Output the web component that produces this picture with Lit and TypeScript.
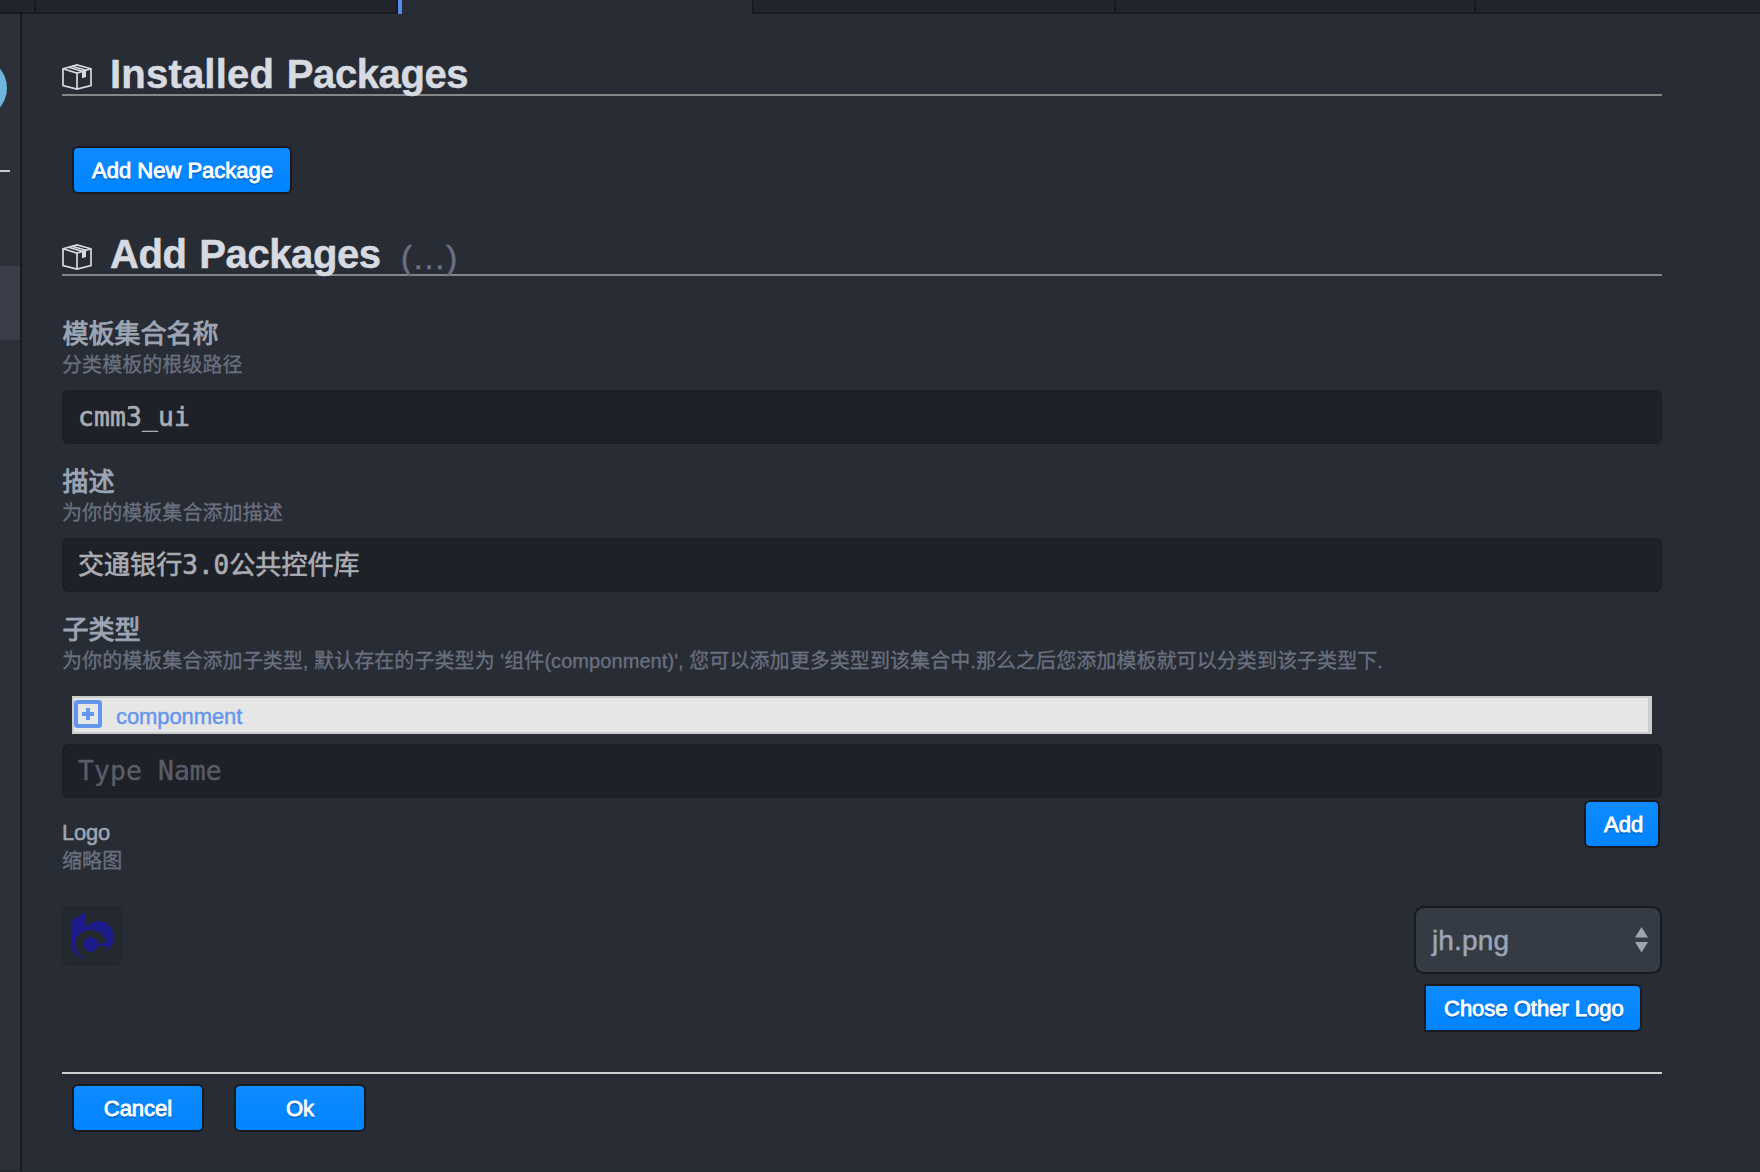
import { LitElement, html, css, svg } from "lit";
import { customElement, property } from "lit/decorators.js";

@customElement("section-heading")
class SectionHeading extends LitElement {
  @property() lead = "";
  @property() note = "";
  @property({ type: Boolean }) wide = false;

  static styles = css`
    :host { display: block; }
    .heading {
      box-sizing: border-box;
      height: 42px;
      border-bottom: 2px solid #868686;
      display: flex;
      align-items: flex-start;
      font-family: "Liberation Sans", sans-serif;
    }
    .icon { width: 30px; height: 26px; margin: 10px 18px 0 0; flex: none; }
    .title {
      font-size: 40px;
      line-height: 46px;
      font-weight: 700;
      letter-spacing: -0.4px;
      word-spacing: 2px;
      color: #d7dae0;
      white-space: pre;
      margin-top: -3px;
      -webkit-text-stroke: 0.5px #d7dae0;
    }
    .wide { letter-spacing: 0.2px; }
    .note { font-size: 34px; line-height: 46px; color: #6b7080; margin: 0 0 0 20px; -webkit-text-stroke: 0.4px #6b7080; }
  `;

  render() {
    return html`<div class="heading">
      <svg class="icon" viewBox="0 0 30 26" fill="none" stroke="#d7dae0" stroke-width="1.700">
        <path d="M1 4.800 15 1l14 3.800v16.700L15 25 1 21.500z" />
        <path d="M1 4.800l14 4.200 14-4.200M15 9v16" />
        <path d="M6.500 3.300l14.500 4.200M10 2.300l14 4" />
        <path d="M20 7.500v6.800l4-1.300V6.200z" fill="#d7dae0" stroke="none" />
      </svg>
      <span class="title"><span class=${this.wide ? "wide" : ""}>${this.lead}</span> Packages</span>
      ${this.note ? html`<span class="note">${this.note}</span>` : ""}
    </div>`;
  }
}

const plusIcon = svg`<rect x="2" y="2" width="24" height="24" rx="1.500" fill="none" stroke="#6495ed" stroke-width="4"/>
  <path d="M12 8h4v4h4v4h-4v4h-4v-4H8v-4h4z" fill="#6495ed"/>`;

@customElement("app-root")
class AppRoot extends LitElement {
  static styles = css`
    :host {
      display: block;
      font-family: "Liberation Sans", "Noto Sans CJK SC", sans-serif;
      color: #9da5b4;
    }
    * { box-sizing: border-box; }
    .window {
      width: 1760px;
      height: 1172px;
      overflow: hidden;
      background: #282c34;
      border-bottom: 1px solid #2a2530;
      display: flex;
      flex-direction: column;
    }
    .tabs { display: flex; height: 14px; flex: none; }
    .tab { background: #21252b; border-right: 2px solid #181a1f; border-bottom: 2px solid #181a1f; }
    .tab.first { width: 36px; }
    .tab.second { width: 362px; }
    .tab.active { width: 354px; background: #282c34; border: 0; border-left: 4px solid #568af2; }
    .tab.third { width: 364px; border-left: 2px solid #181a1f; border-bottom-left-radius: 2px; }
    .tab.fourth { width: 360px; }
    .tab.last { flex: 1; border-right: 0; }
    .body { flex: 1; display: flex; }
    .side { width: 22px; background: #2c3038; border-right: 2px solid #181a1f; overflow: hidden; flex: none; }
    .avatar { width: 60px; height: 60px; border-radius: 50%; background: #6fb5dc; margin: 44px 0 0 -53px; }
    .rule { width: 10px; height: 2px; background: #ccc; margin-top: 52px; }
    .selected { height: 74px; background: #3a3e4a; margin-top: 94px; }
    .panel { width: 1600px; margin-left: 40px; padding-top: 40px; }
    .btn {
      display: block;
      height: 48px;
      padding: 1px 18px 0;
      border: 2px solid #181a1f;
      border-radius: 6px;
      background: linear-gradient(#0f8bff, #0084ff);
      color: #fff;
      font: 22px/43px "Liberation Sans", sans-serif;
      -webkit-text-stroke: 0.8px #fff;
      text-shadow: 0 2px 1px rgba(0, 0, 0, 0.25);
      text-align: center;
      white-space: nowrap;
    }
    .new { width: 220px; margin: 50px 0 40px 10px; }
    .label {
      height: 36px;
      padding: 2.500px 0 0 0.500px;
      font-size: 26px;
      line-height: 34px;
      -webkit-text-stroke: 0.9px #9da5b4;
    }
    .hint {
      height: 24px;
      padding-top: 2px;
      font-size: 20px;
      line-height: 26px;
      letter-spacing: 0.070px;
      color: #6b7080;
      white-space: nowrap;
      -webkit-text-stroke: 0.3px #6b7080;
    }
    .field { height: 148px; }
    .fields { padding-top: 38px; }
    .input {
      display: block;
      width: 1600px;
      height: 54px;
      padding: 0 14px;
      border: 2px solid #1c1f24;
      border-radius: 6px;
      background: #1e2128;
      color: #abadb3;
      font: 26.300px "DejaVu Sans Mono", "Noto Sans CJK SC", monospace;
      letter-spacing: 0.150px;
      -webkit-text-stroke: 0.6px currentColor;
      outline: 0;
    }
    .input.cjk { padding-bottom: 5px; font-size: 26px; letter-spacing: 0.050px; }
    .field .input { margin-top: 16px; }
    .input::placeholder { color: #5a5d68; opacity: 1; -webkit-text-stroke: 0.4px #5a5d68; }
    .type {
      display: flex;
      align-items: flex-start;
      height: 38px;
      margin: 26px 10px 10px;
      border: 2px solid #ccc;
      border-right-width: 4px;
      background: #e6e6e6;
      color: #6495ed;
      font-size: 22px;
      line-height: 37px;
      letter-spacing: -0.1px;
      -webkit-text-stroke: 0.4px #6495ed;
    }
    .plus { width: 28px; height: 28px; margin: 2px 14px 0 0; flex: none; }
    .split { display: flex; justify-content: space-between; }
    .logo-head { height: 108px; }
    .logo-label { font-size: 22px; line-height: 26px; margin: 22px 0 0; letter-spacing: -0.2px; -webkit-text-stroke: 0.5px #9da5b4; }
    .add { width: 76px; margin: 2px 2px 0 0; }
    .logo { width: 60px; height: 60px; border-radius: 5px; background: #24282f; }
    .mark { display: block; width: 60px; height: 60px; }
    .select {
      display: flex;
      align-items: center;
      justify-content: space-between;
      width: 248px;
      height: 68px;
      padding: 0 12px 0 16px;
      border: 2px solid #181a1f;
      border-radius: 10px;
      background: #353b45;
      font-size: 28px;
      -webkit-text-stroke: 0.5px #9da5b4;
    }
    .value { padding-top: 2px; letter-spacing: 0.15px; }
    .arrows { width: 13px; height: 26px; fill: #9da5b4; }
    .chose { width: 218px; margin: 10px 0 0 10px; border-radius: 0 6px 6px 0; }
    .actions { margin-top: 40px; padding: 10px 10px 0; border-top: 2px solid #ccd0cf; display: flex; gap: 30px; }
    .actions .btn { width: 132px; }
  `;

  render() {
    return html`<div class="window">
      <div class="tabs">
        <div class="tab first"></div>
        <div class="tab second"></div>
        <div class="tab active"></div>
        <div class="tab third"></div>
        <div class="tab fourth"></div>
        <div class="tab last"></div>
      </div>
      <div class="body">
        <div class="side">
          <div class="avatar"></div>
          <div class="rule"></div>
          <div class="selected"></div>
        </div>
        <div class="panel">
          <section-heading lead="Installed" wide></section-heading>
          <button class="btn new">Add New Package</button>
          <section-heading lead="Add" note="(…)"></section-heading>
          <div class="fields">
            <div class="field">
              <div class="label">模板集合名称</div>
              <div class="hint">分类模板的根级路径</div>
              <input class="input" .value=${"cmm3_ui"} />
            </div>
            <div class="field">
              <div class="label">描述</div>
              <div class="hint">为你的模板集合添加描述</div>
              <input class="input cjk" .value=${"交通银行3.0公共控件库"} />
            </div>
            <div class="label">子类型</div>
            <div class="hint">为你的模板集合添加子类型, 默认存在的子类型为 '组件(componment)', 您可以添加更多类型到该集合中.那么之后您添加模板就可以分类到该子类型下.</div>
            <div class="type"><svg class="plus" viewBox="0 0 28 28">${plusIcon}</svg>componment</div>
            <input class="input" placeholder="Type Name" />
          </div>
          <div class="split logo-head">
            <div>
              <div class="logo-label">Logo</div>
              <div class="hint">缩略图</div>
            </div>
            <button class="btn add">Add</button>
          </div>
          <div class="split">
            <div class="logo">
              <svg class="mark" viewBox="0 0 60 60" fill="#1c1c8c">
                <path d="M10 14.500 23.500 6v15.500C27 17 32 14.800 37 15c9 .5 15 8 14.800 17-.3 6-3.800 11-9.800 13.500 2-2 2.800-3.500 3-5.500H34v-2.500l10-.5c1-4-4-12.500-14.500-13C19 24 13.500 30.500 13.500 37.500c0 6.500 3.500 12 8.500 14-2 1.200-3 .8-4 .2L10 44z" />
                <circle cx="28.700" cy="38.500" r="7.300" />
              </svg>
            </div>
            <div>
              <div class="select"><span class="value">jh.png</span><svg class="arrows" viewBox="0 0 13 26"><path d="M6.500 0 13 10.500H0zM0 15h13L6.500 25.500z" /></svg></div>
              <button class="btn chose">Chose Other Logo</button>
            </div>
          </div>
          <div class="actions">
            <button class="btn">Cancel</button>
            <button class="btn">Ok</button>
          </div>
        </div>
      </div>
    </div>`;
  }
}
